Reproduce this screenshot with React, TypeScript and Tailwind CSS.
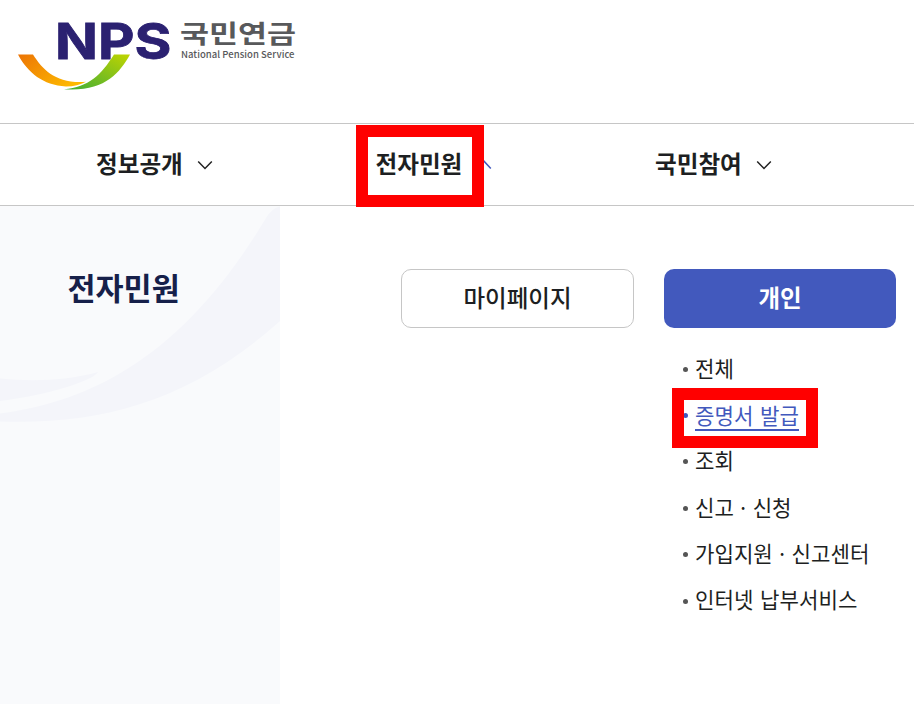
const links = [
  { label: '전체' },
  { label: '증명서 발급', active: true },
  { label: '조회' },
  { label: '신고 · 신청', dotted: true },
  { label: '가입지원 · 신고센터', dotted: true },
  { label: '인터넷 납부서비스' },
];

const menus = [
  { label: '정보공개' },
  { label: '전자민원', open: true },
  { label: '국민참여' },
];

function Logo() {
  return (
    <svg width="300" height="100" viewBox="0 0 300 100" role="img" aria-label="NPS 국민연금">
      <defs>
        <linearGradient id="orange" x1="0" y1="0" x2="1" y2="0.6">
          <stop offset="0" stopColor="#ec7405" />
          <stop offset="1" stopColor="#fdb900" />
        </linearGradient>
        <linearGradient id="green" x1="0" y1="1" x2="1" y2="0">
          <stop offset="0" stopColor="#3fae36" />
          <stop offset="0.45" stopColor="#78bd20" />
          <stop offset="1" stopColor="#c0d500" />
        </linearGradient>
      </defs>
      <text
        transform="translate(55 58.7)"
        className="font-['Inter'] text-[50px] font-bold"
        fill="#2b2171"
        stroke="#2b2171"
        strokeWidth="0.8"
        textLength="116.500"
        lengthAdjust="spacingAndGlyphs"
      >
        NPS
      </text>
      <path d="M18 54.500H33C43 70 56 84 86 81.800C80 85 74 86.500 66 86.500C43 85 28 73 18 54.500Z" fill="url(#orange)" />
      <path d="M114 54.500H130C119 74 104 92 64 89.200C89 87 101 75 114 54.500Z" fill="url(#green)" />
      <text
        transform="translate(180 43)"
        className="font-['Noto_Sans_CJK_KR',sans-serif] text-[25px] font-bold"
        fill="#58595b"
        textLength="116"
        lengthAdjust="spacingAndGlyphs"
      >
        국민연금
      </text>
      <text
        x="181"
        y="58"
        className="font-['Noto_Sans_CJK_KR',sans-serif] text-[9.500px] font-medium"
        fill="#58595b"
        textLength="113.500"
      >
        National Pension Service
      </text>
    </svg>
  );
}

function Chevron({ open }: { open?: boolean }) {
  return (
    <svg width="16" height="10" viewBox="0 0 16 10" fill="none" className="mt-0.5 ml-3.5">
      <path
        d={open ? 'M1.200 8.500L8 1.200L14.800 8.500' : 'M1.200 1.500L8 8.500L14.800 1.500'}
        stroke={open ? '#4259bd' : '#222222'}
        strokeWidth="1.500"
      />
    </svg>
  );
}

export default function App() {
  return (
    <div className="flex h-[704px] w-[914px] flex-col overflow-hidden bg-white font-['Noto_Sans_CJK_KR',sans-serif] text-[#1d1f22]">
      <header className="h-[123px] shrink-0">
        <Logo />
      </header>

      <nav className="flex h-[83px] shrink-0 border-y border-[#c6c6c6] pl-[96px]">
        {menus.map((menu) => (
          <div key={menu.label} className="relative flex w-[279.500px] shrink-0 items-center pb-0.5">
            <span className="pb-0.5 text-[23.600px] leading-8 font-bold">{menu.label}</span>
            <Chevron open={menu.open} />
            {menu.open && (
              <span className="absolute top-px left-[-19.500px] h-[82px] w-32 border-12 border-[#ff0000]" />
            )}
          </div>
        ))}
      </nav>

      <div className="flex grow">
        <aside className="relative w-[280px] shrink-0 bg-[#f9fafc]">
          <svg className="absolute inset-0" width="280" height="240" viewBox="0 0 280 240" fill="#f4f5fa">
            <path d="M280 0.500Q272 2 266 12C182 153 88 196 0 207.500V215.500C100 219 190 196 280 115Z" />
            <path d="M0 172.500C35 176 70 174 98 166C94 174 50 189 0 195Z" />
          </svg>
          <h2 className="relative pt-[58px] pl-[67.500px] text-[30.500px] leading-[46px] font-bold text-[#16204a]">
            전자민원
          </h2>
        </aside>

        <main className="flex items-start gap-[30px] pt-[63px] pl-[121px]">
          <button className="h-[59px] w-[233px] rounded-[10px] border border-[#c6c6c6] pb-0.5 text-[23.500px] font-medium">
            마이페이지
          </button>
          <section className="w-[232px]">
            <button className="h-[59px] w-full rounded-[10px] bg-[#4259bd] pb-0.5 text-[23.500px] font-bold text-white">
              개인
            </button>
            <ul className="mt-[18px] pl-[19px]">
              {links.map((link) => (
                <li key={link.label} className="relative flex h-[46.400px] items-center whitespace-nowrap">
                  <span
                    className={`size-[5px] rounded-full ${link.active ? 'bg-[#4259bd]' : 'bg-[#555555]'}`}
                  />
                  <span
                    className={`ml-[7px] text-[21.150px] leading-7 ${link.dotted ? '[word-spacing:-1.300px]' : '[word-spacing:2px]'} ${link.active ? 'border-b-2 border-[#4259bd] text-[#4259bd]' : 'pb-[3.400px]'}`}
                  >
                    {link.label}
                  </span>
                  {link.active && (
                    <span className="absolute top-[-4px] left-[-11px] h-[60px] w-[146px] border-12 border-[#ff0000]" />
                  )}
                </li>
              ))}
            </ul>
          </section>
        </main>
      </div>
    </div>
  );
}
